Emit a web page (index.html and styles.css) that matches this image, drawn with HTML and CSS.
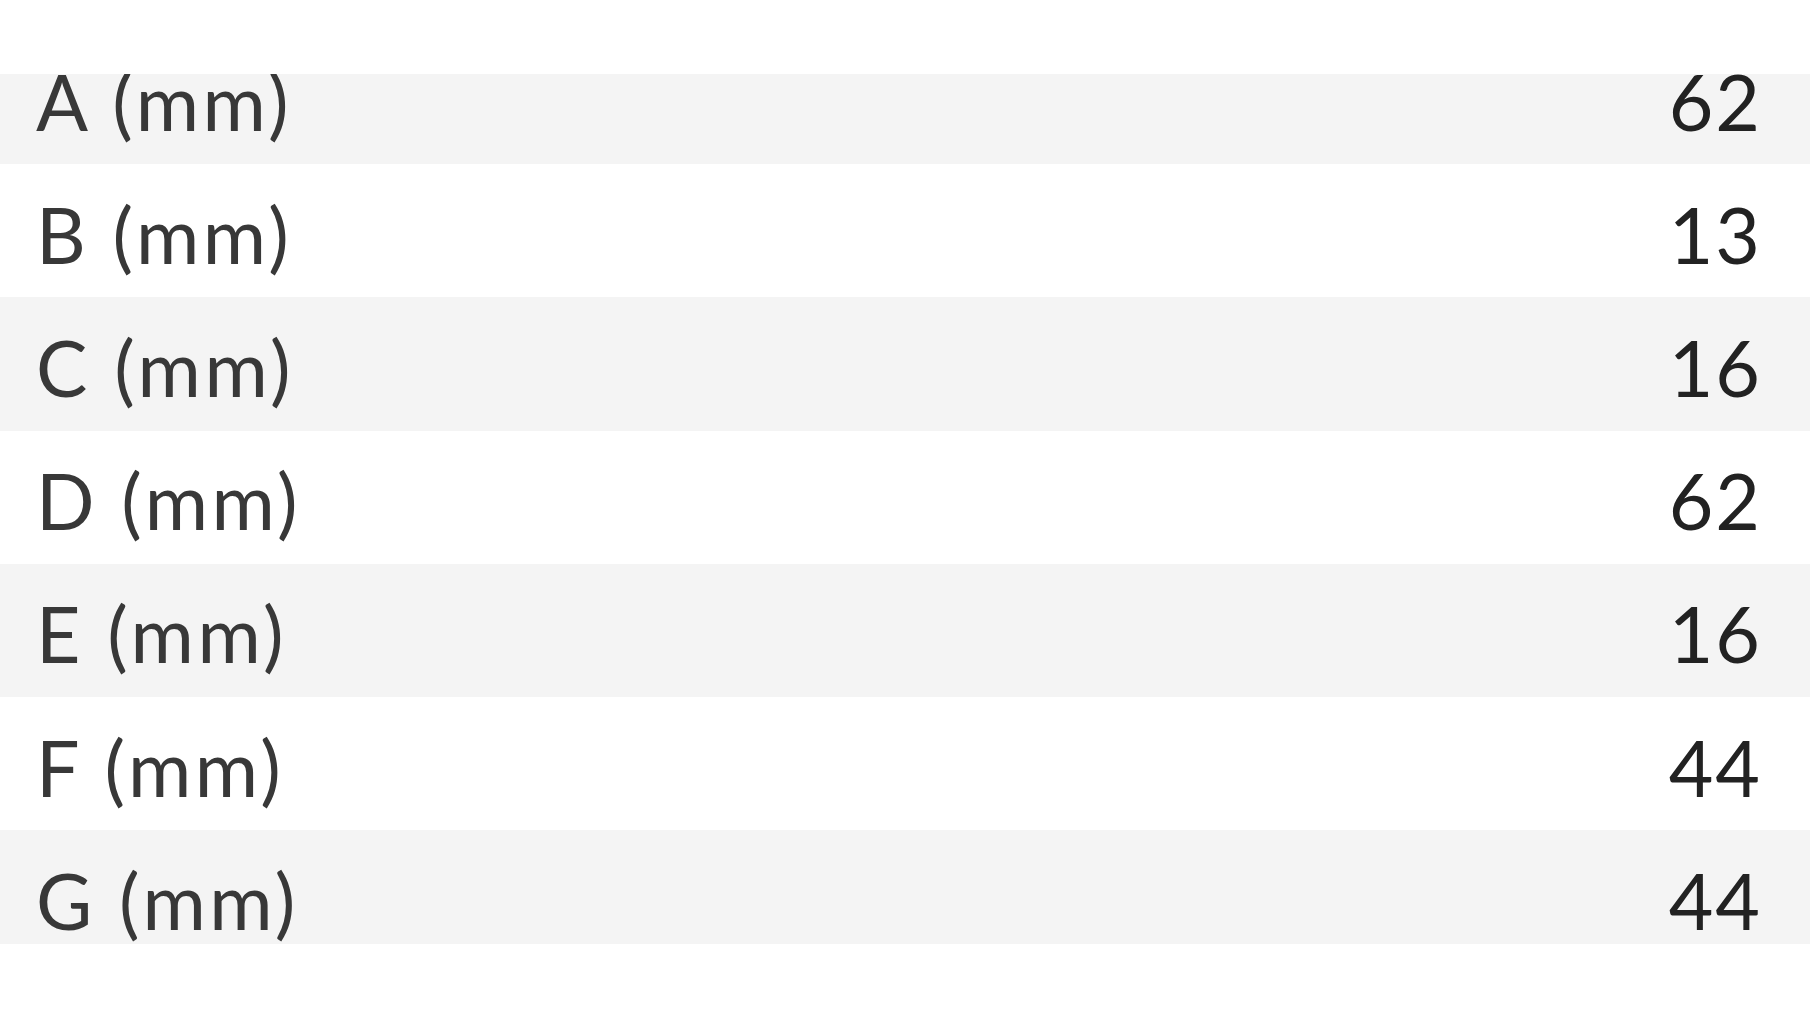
FILE: index.html
```html
<!DOCTYPE html>
<html>
<head>
<meta charset="utf-8">
<link rel="stylesheet" href="styles.css">
</head>
<body>
<div class="top"></div>
<div class="viewport">
  <div class="list">
    <div class="row"><span class="label">A (mm)</span><span class="value">62</span></div>
    <div class="row"><span class="label">B (mm)</span><span class="value">13</span></div>
    <div class="row"><span class="label">C (mm)</span><span class="value">16</span></div>
    <div class="row"><span class="label">D (mm)</span><span class="value">62</span></div>
    <div class="row"><span class="label">E (mm)</span><span class="value">16</span></div>
    <div class="row"><span class="label">F (mm)</span><span class="value">44</span></div>
    <div class="row"><span class="label">G (mm)</span><span class="value">44</span></div>
  </div>
</div>
</body>
</html>
```
FILE: styles.css
```css
html, body {
  margin: 0;
  padding: 0;
  background: #ffffff;
}
body {
  font-family: Lato, "Open Sans", sans-serif;
  width: 1810px;
  height: 1018px;
  overflow: hidden;
}
.top {
  height: 74px;
}
.viewport {
  height: 870px;
  overflow: hidden;
}
.list {
  margin-top: -43px;
  display: flex;
  flex-direction: column;
}
.row {
  height: 133.2px;
  display: flex;
  align-items: center;
  justify-content: space-between;
  padding: 6px 48px 0 36px;
  box-sizing: border-box;
  font-size: 77px;
  color: #383838;
}
.row:nth-child(odd) {
  background: #f4f4f4;
}
.label {
  letter-spacing: 3.5px;
}
.value {
  color: #222222;
  letter-spacing: 2px;
}
```
